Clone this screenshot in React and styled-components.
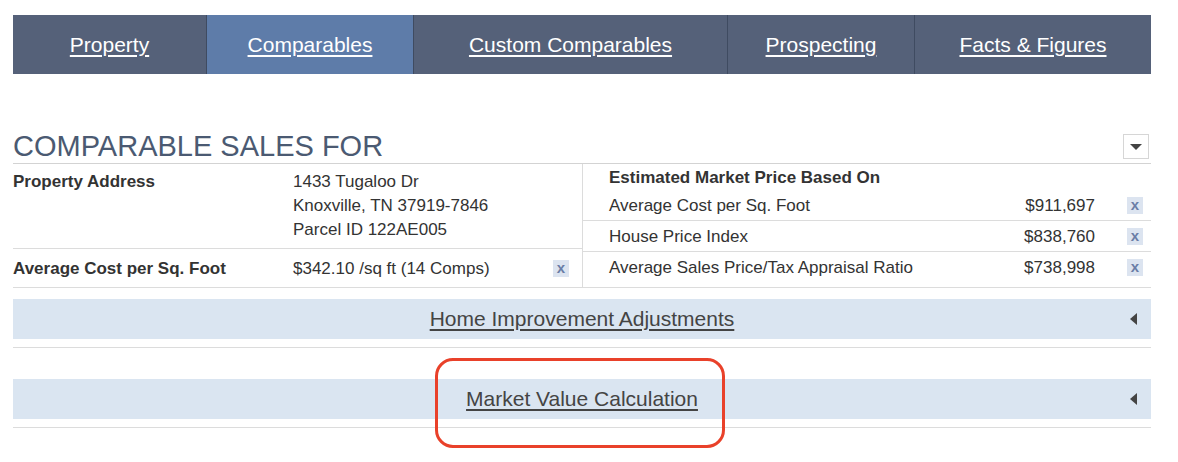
import React from 'react';
import styled, { createGlobalStyle } from 'styled-components';

const GlobalStyle = createGlobalStyle`
  * { box-sizing: border-box; }
  body {
    margin: 0;
    min-height: 462px;
    background: #fff;
    font-family: "Liberation Sans", Arial, sans-serif;
    color: #333;
  }
`;

const Page = styled.div`
  width: 1138px;
  margin-left: 13px;
  padding: 15px 0 30px;
`;

const NavBar = styled.nav`
  display: flex;
  height: 59px;
  background: #556179;
`;

const Tab = styled.a`
  display: flex;
  align-items: center;
  justify-content: center;
  width: ${(p) => p.$width}px;
  background: ${(p) => (p.$active ? '#5e7ca9' : '#556179')};
  border-left: ${(p) => (p.$first ? 'none' : '1px solid #3f4b61')};
  color: #fff;
  font-size: 21px;
  text-decoration: underline;
  text-underline-offset: 3px;
  cursor: pointer;
`;

const TitleRow = styled.div`
  display: flex;
  justify-content: space-between;
  align-items: flex-end;
  margin-top: 55px;
  border-bottom: 1px solid #d3d3d3;
`;

const Title = styled.h1`
  margin: 0;
  font-size: 29px;
  font-weight: normal;
  line-height: 34px;
  color: #4b5a72;
`;

const DropButton = styled.button`
  display: flex;
  align-items: center;
  justify-content: center;
  width: 26px;
  height: 25px;
  margin: 0 2px 4px 0;
  padding: 0;
  background: #fff;
  border: 1px solid #d6d6d6;

  &::after {
    content: '';
    border-left: 6px solid transparent;
    border-right: 6px solid transparent;
    border-top: 6px solid #444;
  }
`;

const Summary = styled.div`
  display: grid;
  grid-template-columns: 570px 568px;
`;

const Column = styled.div`
  display: flex;
  flex-direction: column;
  border-right: ${(p) => (p.$divider ? '1px solid #dcdcdc' : 'none')};
`;

const InfoRow = styled.div`
  display: grid;
  grid-template-columns: 280px 1fr auto;
  align-items: start;
  flex: ${(p) => (p.$grow ? 1 : 'none')};
  padding: ${(p) => p.$pad};
  padding-right: 13px;
  border-bottom: 1px solid #dcdcdc;
  font-size: 17px;
  line-height: 24px;
`;

const Label = styled.div`
  font-weight: bold;
  color: #333;
`;

const Value = styled.div`
  color: #333;
`;

const RightHeader = styled.div`
  padding: 2px 0 0 26px;
  font-size: 17px;
  line-height: 24px;
  font-weight: bold;
  color: #333;
`;

const PriceRow = styled.div`
  display: grid;
  grid-template-columns: 1fr auto 56px;
  align-items: start;
  flex: ${(p) => (p.$grow ? 1 : 'none')};
  padding: 4px 0 2px 26px;
  border-bottom: 1px solid #dcdcdc;
  font-size: 17px;
  line-height: 24px;
  color: #333;
`;

const Price = styled.div`
  text-align: right;
`;

const RemoveIcon = styled.span`
  display: flex;
  align-items: center;
  justify-content: center;
  justify-self: end;
  width: 16px;
  height: 17px;
  margin-top: 3px;
  margin-right: ${(p) => p.$right || 0}px;
  padding-bottom: 2px;
  background: #dce4f0;
  color: #6a7da6;
  font-size: 15px;
  font-weight: bold;
  line-height: 1;
`;

const Section = styled.section`
  position: relative;
  margin-top: ${(p) => p.$top}px;
`;

const SectionBar = styled.div`
  display: grid;
  grid-template-columns: 1fr auto 1fr;
  align-items: center;
  height: 40px;
  background: #dae5f1;
`;

const SectionTitle = styled.a`
  grid-column: 2;
  font-size: 21px;
  color: #444;
  text-decoration: underline;
  text-underline-offset: 3px;
  cursor: pointer;
`;

const Caret = styled.span`
  justify-self: end;
  margin-right: 14px;
  border-top: 6px solid transparent;
  border-bottom: 6px solid transparent;
  border-right: 7px solid #444;
`;

const SectionBody = styled.div`
  height: 9px;
  border-bottom: 1px solid #dcdcdc;
`;

const Highlight = styled.div`
  position: absolute;
  left: 422px;
  top: -21px;
  width: 290px;
  height: 90px;
  border: 3px solid #e9412a;
  border-radius: 18px;
  pointer-events: none;
`;

const tabs = [
  { label: 'Property', width: 193 },
  { label: 'Comparables', width: 207, active: true },
  { label: 'Custom Comparables', width: 314 },
  { label: 'Prospecting', width: 187 },
  { label: 'Facts & Figures', width: 237 },
];

const prices = [
  { label: 'Average Cost per Sq. Foot', value: '$911,697' },
  { label: 'House Price Index', value: '$838,760' },
  { label: 'Average Sales Price/Tax Appraisal Ratio', value: '$738,998' },
];

const App = () => {
  return (
    <>
      <GlobalStyle />
      <Page>
        <NavBar>
          {tabs.map((t, i) => (
            <Tab key={t.label} $width={t.width} $active={t.active} $first={i === 0}>
              {t.label}
            </Tab>
          ))}
        </NavBar>

        <TitleRow>
          <Title>COMPARABLE SALES FOR</Title>
          <DropButton aria-label="Options" />
        </TitleRow>

        <Summary>
          <Column $divider>
            <InfoRow $pad="6px 0 6px">
              <Label>Property Address</Label>
              <Value>
                1433 Tugaloo Dr
                <br />
                Knoxville, TN 37919-7846
                <br />
                Parcel ID 122AE005
              </Value>
            </InfoRow>
            <InfoRow $pad="8px 0 6px" $grow>
              <Label>Average Cost per Sq. Foot</Label>
              <Value>$342.10 /sq ft (14 Comps)</Value>
              <RemoveIcon>x</RemoveIcon>
            </InfoRow>
          </Column>

          <Column>
            <RightHeader>Estimated Market Price Based On</RightHeader>
            {prices.map((p, i) => (
              <PriceRow key={p.label} $grow={i === prices.length - 1}>
                <div>{p.label}</div>
                <Price>{p.value}</Price>
                <RemoveIcon $right={8}>x</RemoveIcon>
              </PriceRow>
            ))}
          </Column>
        </Summary>

        <Section $top={11}>
          <SectionBar>
            <SectionTitle>Home Improvement Adjustments</SectionTitle>
            <Caret />
          </SectionBar>
          <SectionBody />
        </Section>

        <Section $top={31}>
          <SectionBar>
            <SectionTitle>Market Value Calculation</SectionTitle>
            <Caret />
          </SectionBar>
          <SectionBody />
          <Highlight />
        </Section>
      </Page>
    </>
  );
};

export default App;
